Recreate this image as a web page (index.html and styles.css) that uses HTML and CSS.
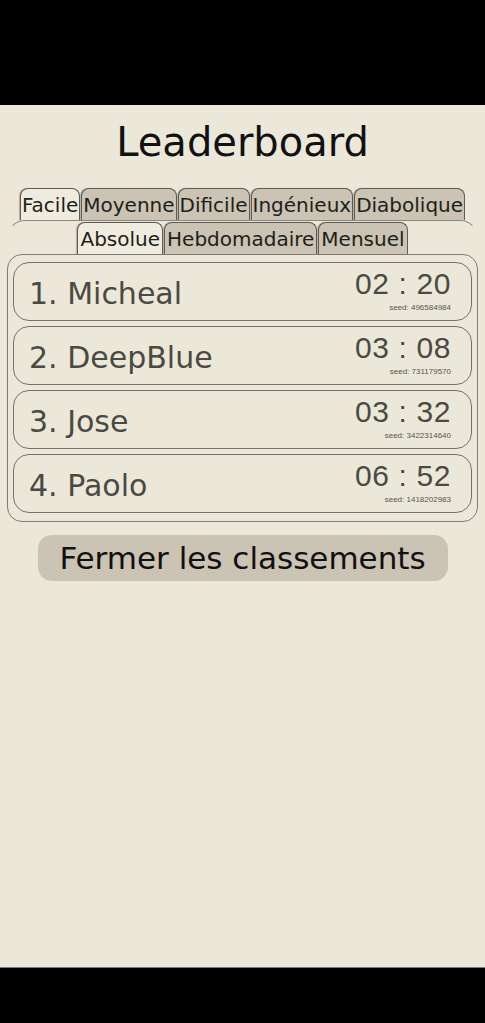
FILE: index.html
```html
<html>
    <head>
        <title>Leaderboard</title>
        <link rel="stylesheet" href="styles.css">
    </head>

    <body>
        <div class="screen">
            <h1 class="title">Leaderboard</h1>

            <div class="tabs">
                <span class="tab active">Facile</span>
                <span class="tab">Moyenne</span>
                <span class="tab">Dificile</span>
                <span class="tab">Ingénieux</span>
                <span class="tab">Diabolique</span>
            </div>

            <div class="board">
                <div class="tabs period">
                    <span class="tab active">Absolue</span>
                    <span class="tab">Hebdomadaire</span>
                    <span class="tab">Mensuel</span>
                </div>

                <div class="list">
                    <div class="row">
                        <p class="name">1. Micheal</p>
                        <div class="score">
                            <p class="time">02 : 20</p>
                            <p class="seed">seed: 496584984</p>
                        </div>
                    </div>
                    <div class="row">
                        <p class="name">2. DeepBlue</p>
                        <div class="score">
                            <p class="time">03 : 08</p>
                            <p class="seed">seed: 731179570</p>
                        </div>
                    </div>
                    <div class="row">
                        <p class="name">3. Jose</p>
                        <div class="score">
                            <p class="time">03 : 32</p>
                            <p class="seed">seed: 3422314640</p>
                        </div>
                    </div>
                    <div class="row">
                        <p class="name">4. Paolo</p>
                        <div class="score">
                            <p class="time">06 : 52</p>
                            <p class="seed">seed: 1418202983</p>
                        </div>
                    </div>
                </div>
            </div>

            <button class="close">Fermer les classements</button>
        </div>
    </body>
</html>
```

FILE: styles.css
```css
body{
    margin: 0;
    background-color: #000;
    font-family: "DejaVu Sans", sans-serif;
}

p{
    margin: 0;
}

.screen{
    margin-top: 105px;
    height: 863px;
    background-color: #ebe8da;
    border-bottom: 1px solid #7c7b70;
    padding-top: 13px;
    box-sizing: border-box;
}

.title{
    margin: 0;
    font-size: 40px;
    line-height: 48px;
    font-weight: normal;
    text-align: center;
    color: #111;
}

.tabs{
    display: flex;
    justify-content: center;
    gap: 1px;
    margin-top: 22px;
}

.tab{
    height: 32px;
    line-height: 31px;
    padding: 1px 1px 0;
    font-size: 20px;
    color: #1e1e1a;
    background-color: #cbc3b3;
    border: 1px solid #5e5d55;
    border-bottom: none;
    border-radius: 8px 8px 0 0;
    box-shadow: -1px 0 1px rgba(0, 0, 0, 0.25);
    box-sizing: border-box;
}

.tab.active{
    background-color: #efecdf;
}

.board{
    margin: 0 7px;
    border-top: 1px solid #8f8d82;
    border-left: 1px solid transparent;
    border-right: 1px solid transparent;
    border-radius: 18px 18px 0 0;
}

.period{
    margin-top: 1px;
}

.period .tab{
    padding: 1px 2px 0;
}

.list{
    margin: 0 -1px;
    border: 1px solid #7d7b72;
    border-radius: 15px;
    padding: 7px 5px 8px;
    display: flex;
    flex-direction: column;
    gap: 5px;
}

.row{
    height: 59px;
    box-sizing: border-box;
    border: 1px solid #74726a;
    border-radius: 16px;
    padding: 0 20px 0 15px;
    display: flex;
    justify-content: space-between;
    align-items: flex-start;
    color: #4b4a42;
}

.name{
    margin-top: 16px;
    font-size: 30px;
    line-height: 30px;
}

.score{
    text-align: right;
    margin-top: 6px;
}

.time{
    font-family: "Liberation Sans", sans-serif;
    font-size: 30px;
    line-height: 30px;
    letter-spacing: 0.6px;
}

.seed{
    margin-top: 4px;
    font-family: "Liberation Sans", sans-serif;
    font-size: 8px;
    line-height: 10px;
    color: #55544c;
}

.close{
    display: block;
    margin: 13px auto 0;
    width: 410px;
    height: 46px;
    border: none;
    border-radius: 14px;
    background-color: #cbc3b3;
    font-family: "DejaVu Sans", sans-serif;
    font-size: 31px;
    line-height: 46px;
    color: #111;
    padding: 0;
}
```
